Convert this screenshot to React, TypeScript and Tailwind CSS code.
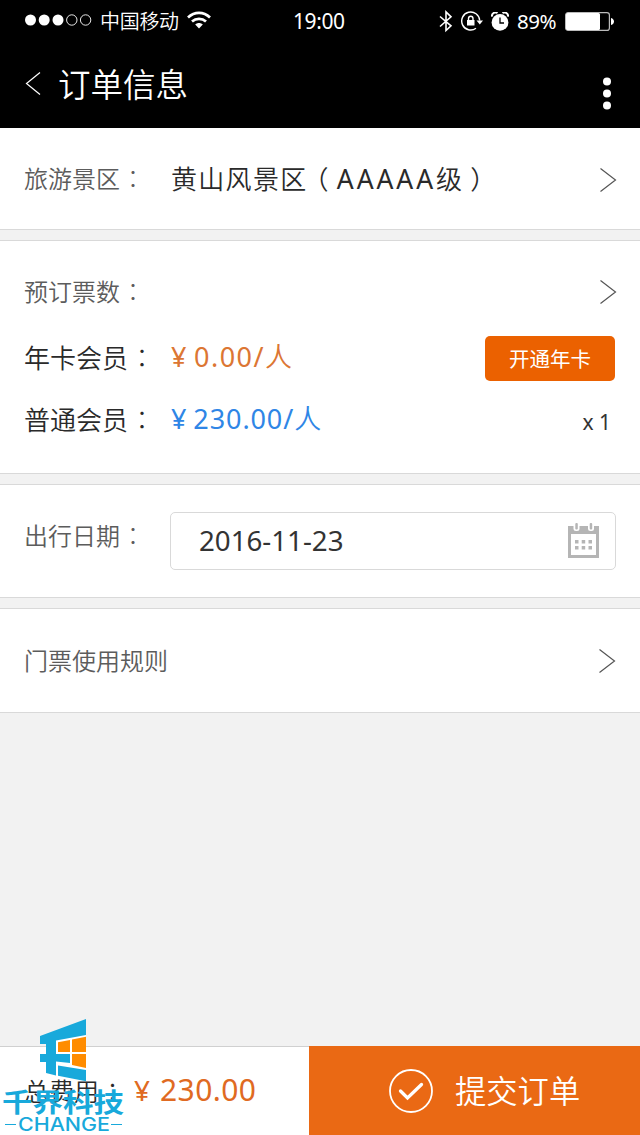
import type { ReactNode } from 'react';

const FONT = "font-['Noto_Sans','Noto_Sans_CJK_SC',sans-serif]";
const CJK = "font-['Noto_Sans_CJK_SC_DemiLight','Noto_Sans_CJK_SC',sans-serif] font-[350]";

function Colon() {
  return <span className="ml-px font-['Noto_Sans_CJK_TC',sans-serif] font-light">：</span>;
}

function Label({ children }: { children: ReactNode }) {
  return <span className={`-mt-[2px] w-[147px] shrink-0 whitespace-nowrap text-[24px] leading-[36px] text-[#5c5c5c] ${CJK}`}>{children}</span>;
}

function Chevron() {
  return (
    <svg className="h-[26px] w-[18px] shrink-0" viewBox="0 0 18 26" fill="none" stroke="#555" strokeWidth="1.2">
      <path d="M1.5 1.5 16.5 13 1.5 24.5" />
    </svg>
  );
}

function StatusBar() {
  return (
    <div className="flex h-[42px] items-center pl-[25px] pr-[26px] text-white">
      <svg className="-mt-[2px] h-[12px] w-[67px]" viewBox="0 0 67 12">
        <g fill="#fff">
          <circle cx="5.5" cy="6" r="5.5" />
          <circle cx="19.2" cy="6" r="5.5" />
          <circle cx="33" cy="6" r="5.5" />
        </g>
        <g fill="none" stroke="#fff" strokeWidth="0.9">
          <circle cx="46.8" cy="6" r="5.2" />
          <circle cx="60.6" cy="6" r="5.2" />
        </g>
      </svg>
      <span className={`-mt-px ml-[8px] w-[79px] whitespace-nowrap text-[20px] leading-[30px] tracking-[-0.3px] ${CJK}`}>中国移动</span>
      <svg className="-mt-[3px] ml-[8px] h-[18px] w-[24px]" viewBox="0 0 24 18" fill="none" stroke="#fff" strokeWidth="2.7">
        <path d="M1 6.5C7.5.3 16.5.3 23 6.5" />
        <path d="M5 10.6C9 6.9 15 6.9 19 10.6" />
        <path d="M12 17.5 8.2 13.6C10.5 11.6 13.5 11.6 15.8 13.6Z" fill="#fff" stroke="none" />
      </svg>
      <span className="ml-[82px] w-[52px] whitespace-nowrap text-[21px] leading-[30px] tracking-[-0.4px]">19:00</span>
      <svg className="ml-auto h-[23px] w-[14px]" viewBox="0 0 14 23" fill="none" stroke="#fff" strokeWidth="1.6">
        <path d="M1 6.5 12 15.8 7 20.5V2L12 6.8 1 16.5" />
      </svg>
      <svg className="ml-[8px] h-[20px] w-[22px]" viewBox="0 0 22 20" fill="none" stroke="#fff" strokeWidth="1.4">
        <path d="M15 17.3A9 9 0 1 1 18.7 9.5" />
        <path d="M15.5 9.5H22L18.8 13.5Z" fill="#fff" stroke="none" />
        <rect x="6" y="9" width="7.5" height="5.5" fill="#fff" stroke="none" />
        <path d="M7.5 9V7.5a2.25 2.25 0 0 1 4.5 0V9" />
      </svg>
      <svg className="ml-[8px] h-[19px] w-[18px]" viewBox="0 0 18 19">
        <circle cx="9" cy="10.4" r="8.4" fill="#fff" />
        <path d="M1 4.6A3.6 3.6 0 0 1 6.5 1M11.5 1A3.6 3.6 0 0 1 17 4.6" fill="none" stroke="#fff" strokeWidth="2" />
        <path d="M9 5.5V11H13" fill="none" stroke="#000" strokeWidth="1.3" />
      </svg>
      <span className="ml-[8px] w-[40px] whitespace-nowrap text-[20.5px] leading-[30px] tracking-[-0.5px]">89%</span>
      <svg className="ml-[8px] h-[19px] w-[49px]" viewBox="0 0 49 19">
        <rect x=".6" y=".6" width="43.8" height="17.8" rx="2.5" fill="none" stroke="#bbb" strokeWidth="1.2" />
        <rect x="1" y="1" width="34" height="17" rx="1.5" fill="#fff" />
        <path d="M46 6C50 7 50 12 46 13Z" fill="#fff" />
      </svg>
    </div>
  );
}

function Header() {
  return (
    <header className="h-[128px] bg-black">
      <StatusBar />
      <div className="flex h-[86px] items-start pl-[25px] pr-[29px] text-white">
        <svg className="mt-[29px] h-[25px] w-[16px]" viewBox="0 0 16 25" fill="none" stroke="#fff" strokeWidth="1.2">
          <path d="M15 1.5 1.5 12.5 15 23.5" />
        </svg>
        <h1 className={`ml-[17px] mt-[17px] text-[32.5px] leading-[48px] ${CJK}`}>订单信息</h1>
        <svg className="ml-auto mt-[35px] h-[33px] w-[8px]" viewBox="0 0 8 33" fill="#fff">
          <circle cx="4" cy="4.5" r="4" />
          <circle cx="4" cy="16.5" r="4" />
          <circle cx="4" cy="28.5" r="4" />
        </svg>
      </div>
    </header>
  );
}

function CalendarIcon() {
  return (
    <svg className="-mt-px h-[36px] w-[33px]" viewBox="0 0 33 36">
      <path d="M1 3H32V35H1ZM4 11V32H29V11Z" fill="#b5b5b5" fillRule="evenodd" />
      <g fill="#fff">
        <rect x="6.5" y="-1" width="6" height="9" rx="2.5" />
        <rect x="21" y="-1" width="6" height="9" rx="2.5" />
      </g>
      <g fill="#b5b5b5">
        <rect x="8.3" y="0" width="2.5" height="6.5" rx="1" />
        <rect x="22.7" y="0" width="2.5" height="6.5" rx="1" />
        <path d="M8 17h3.5v3.5H8ZM14.7 17h3.5v3.5h-3.5ZM21.5 17H25v3.5h-3.5ZM8 23h3.5v3.5H8ZM14.7 23h3.5v3.5h-3.5ZM21.5 23H25v3.5h-3.5Z" />
      </g>
    </svg>
  );
}

function CompanyLogo() {
  return (
    <div className="absolute left-0 top-[1016px] h-[119px] w-[128px] text-[#18a9db]">
      <svg className="absolute left-[40px] top-[3px] h-[63px] w-[47px]" viewBox="0 0 47 63">
        <path d="M16 20.5 46 15V51L16 46Z" fill="#fff" />
        <path d="M0 17 46 0V16L16 21.5V35H30V44L16 42.5V56.5L6 54V43H0V35H6V25H0Z" fill="currentColor" />
        <path d="M18 23.2 30 21V33H18ZM32 20.6 46 17.7V33H32ZM32 35H46V49L32 46Z" fill="#ff8c00" />
        <path d="M18 46.5 46 51V62.3L18 56.7Z" fill="currentColor" />
      </svg>
      <div className="absolute left-[2px] top-[72px] origin-top-left scale-y-[0.87] whitespace-nowrap font-['Noto_Sans_CJK_SC',sans-serif] text-[30.5px] font-bold leading-[30px]">
        千界科技
      </div>
      <div className="absolute left-[5px] top-[100px] flex h-[17px] w-[117px] items-center justify-between">
        <i className="h-px w-[11px] bg-current" />
        <span className="w-[92px] whitespace-nowrap">
          <span className="block origin-left scale-x-[1.19] font-['Inter',sans-serif] text-[18px] font-medium leading-[17px]">CHANGE</span>
        </span>
        <i className="h-px w-[11px] bg-current" />
      </div>
    </div>
  );
}

export default function App() {
  return (
    <div className={`relative flex h-[1135px] w-[640px] flex-col overflow-hidden bg-[#f2f2f2] text-[#333] ${FONT}`}>
      <Header />
      <main className="flex flex-1 flex-col gap-[10px]">
        <section className="flex h-[102px] items-center border-b border-[#d9d9d9] bg-white pl-[24px] pr-[23px] pt-[3px]">
          <span className="-mt-[2px] flex"><Label>旅游景区<Colon /></Label></span>
          <span className={`-mt-[4px] flex-1 whitespace-nowrap text-[26px] leading-[40px] tracking-[1.3px] text-[#2a2a2a] ${CJK}`}>
            黄山风景区<span className="-ml-[5px] mr-[7px]">（</span>
            <span className="font-['Noto_Sans',sans-serif] text-[26.5px] font-normal tracking-[2.9px]">AAAAA</span>级<span className="ml-[7px]">）</span>
          </span>
          <Chevron />
        </section>

        <section className="h-[234px] border-y border-[#d9d9d9] bg-white pl-[24px] pr-[23px]">
          <div className="flex h-[102px] items-center justify-between">
            <Label>预订票数<Colon /></Label>
            <Chevron />
          </div>
          <div className="-mt-[17px] flex h-[62px] items-center">
            <span className={`w-[147px] whitespace-nowrap text-[26px] leading-[40px] text-[#2a2a2a] ${CJK}`}>年卡会员<Colon /></span>
            <span className="flex-1 whitespace-nowrap text-[27px] leading-[40px] tracking-[1.5px] text-[#dc7633]">
              <span className="mr-[6px]">¥</span>0.00/<span className="font-[350]">人</span>
            </span>
            <button className="mr-[2px] mt-[3px] h-[45px] w-[130px] rounded-[5px] bg-[#eb6100] text-[20.5px] font-normal leading-[30px] text-white">开通年卡</button>
          </div>
          <div className="flex h-[62px] items-center">
            <span className={`w-[147px] whitespace-nowrap text-[26px] leading-[40px] text-[#2a2a2a] ${CJK}`}>普通会员<Colon /></span>
            <span className="flex-1 whitespace-nowrap text-[27px] leading-[40px] tracking-[0.9px] text-[#2f86e6]">
              <span className="mr-[6px]">¥</span>230.00/<span className="font-[350]">人</span>
            </span>
            <span className="mr-[6px] mt-[5px] text-[21px] leading-[30px]">x 1</span>
          </div>
        </section>

        <section className="flex h-[114px] items-center border-y border-[#d9d9d9] bg-white pl-[24px] pr-[24px]">
          <span className={`-mt-[12px] w-[146px] whitespace-nowrap text-[24px] leading-[36px] text-[#5c5c5c] ${CJK}`}>出行日期<Colon /></span>
          <div className="flex h-[58px] flex-1 items-center justify-between rounded-[5px] border border-[#d9d9d9] pl-[28px] pr-[15px]">
            <span className="-mt-[3px] whitespace-nowrap text-[27.7px] leading-[40px]">2016-11-23</span>
            <CalendarIcon />
          </div>
        </section>

        <section className="flex h-[105px] items-center justify-between border-y border-[#d9d9d9] bg-white pl-[24px] pr-[24px]">
          <Label>门票使用规则</Label>
          <Chevron />
        </section>
      </main>

      <footer className="flex h-[89px]">
        <div className="flex w-[309px] items-center border-t border-[#d0d0d0] bg-white pl-[24px]">
          <span className={`-mt-[2px] w-[110px] whitespace-nowrap text-[25px] leading-[40px] text-[#2a2a2a] ${CJK}`}>总费用<Colon /></span>
          <span className="-mt-[2px] whitespace-nowrap text-[30px] leading-[40px] text-[#e06a22]"><span className="text-[28px]">¥</span><span className="ml-[10px] tracking-[0.4px]">230.00</span></span>
        </div>
        <button className="flex flex-1 items-center bg-[#ea6914] pl-[80px] text-white">
          <svg className="h-[44px] w-[44px]" viewBox="0 0 44 44" fill="none" stroke="#fff">
            <circle cx="22" cy="22" r="21" strokeWidth="1.8" />
            <path d="M11.5 22 18.5 29 32.5 15.5" strokeWidth="3.3" strokeLinecap="round" />
          </svg>
          <span className={`-mt-[2px] ml-[22px] whitespace-nowrap text-[31.3px] leading-[46px] ${CJK}`}>提交订单</span>
        </button>
      </footer>
      <CompanyLogo />
    </div>
  );
}
